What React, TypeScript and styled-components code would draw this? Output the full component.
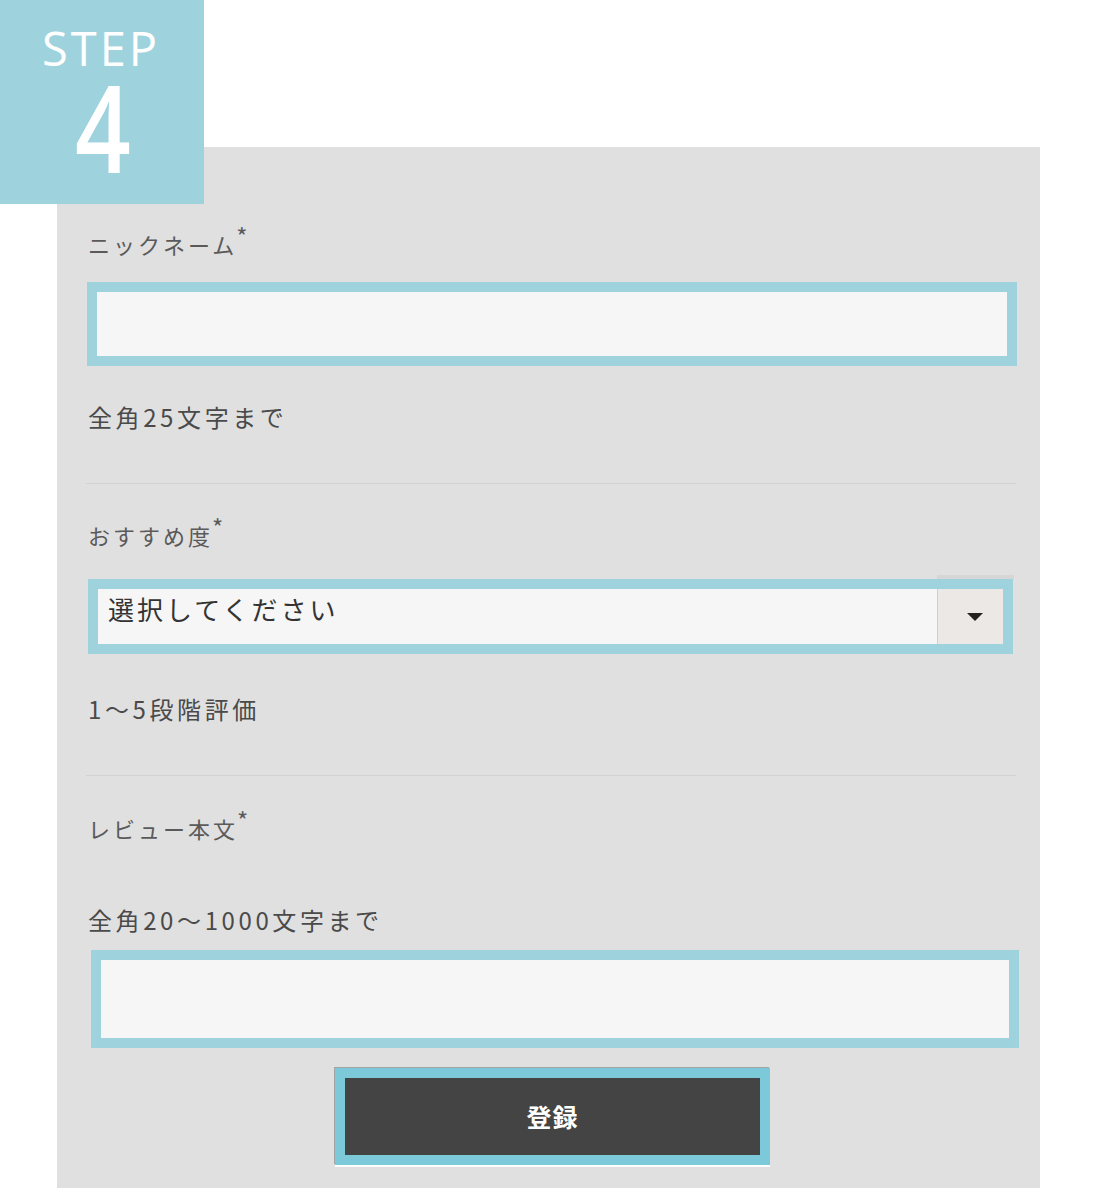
import React from "react";
import styled, { createGlobalStyle } from "styled-components";

const Global = createGlobalStyle`
  html, body { margin: 0; padding: 0; background: #ffffff; }
  body { font-family: "Noto Sans CJK JP", "Noto Sans", sans-serif; }
  * { box-sizing: border-box; }
`;

const Page = styled.div`
  width: 1100px;
  height: 1190px;
  position: relative;
`;

const Badge = styled.div`
  position: relative;
  z-index: 2;
  width: 204px;
  height: 204px;
  background: #9ed3de;
  color: #ffffff;
  display: flex;
  flex-direction: column;
  align-items: center;
  font-family: "Open Sans", "Roboto", sans-serif;
`;

const StepWord = styled.div`
  margin-top: 24px;
  margin-left: -2px;
  font-size: 47px;
  font-weight: 500;
  letter-spacing: 3px;
  line-height: 48px;
  height: 48px;
`;

const StepNum = styled.div`
  margin-top: 4px;
  margin-left: 2px;
  font-size: 122px;
  font-weight: 600;
  line-height: 100px;
  height: 100px;
  transform: scaleX(0.8);
`;

const Panel = styled.div`
  position: relative;
  z-index: 1;
  margin: -57px 0 0 57px;
  width: 983px;
  height: 1041px;
  background: #e0e0e0;
  padding: 82px 23px 0 31px;
  display: flex;
  flex-direction: column;
`;

const Label = styled.div<{ $mt?: number }>`
  margin-top: ${(p) => p.$mt ?? 0}px;
  font-size: 22px;
  line-height: 30px;
  height: 30px;
  letter-spacing: 3px;
  color: #5a5a5a;
  white-space: nowrap;
`;

const Req = styled.span`
  display: inline-block;
  font-size: 24px;
  line-height: 0;
  letter-spacing: 0;
  position: relative;
  top: -8px;
  margin-left: -1px;
  color: #5a5a5a;
`;

const Note = styled.div<{ $mt: number }>`
  margin-top: ${(p) => p.$mt}px;
  font-size: 24px;
  line-height: 36px;
  letter-spacing: 3.6px;
  color: #4a4a4a;
  white-space: nowrap;
`;

const Divider = styled.hr`
  margin: 48px 0 0 -2px;
  width: 930px;
  height: 0;
  border: none;
  border-top: 1px solid #d2d2d2;
`;

const TextField = styled.div<{ $mt: number; $h: number; $ml?: number; $w: number }>`
  margin-top: ${(p) => p.$mt}px;
  margin-left: ${(p) => p.$ml ?? 0}px;
  width: ${(p) => p.$w}px;
  height: ${(p) => p.$h}px;
  border: 10px solid #9ed3de;
  background: #f6f6f6;
`;

const Select = styled.div`
  margin-top: 29px;
  width: 925px;
  height: 75px;
  border: 10px solid #9ed3de;
  background: #f6f6f6;
  display: flex;
  align-items: stretch;
  position: relative;
`;

const SelectText = styled.div`
  flex: 1;
  padding-left: 10px;
  font-size: 26px;
  line-height: 40px;
  letter-spacing: 3px;
  color: #333333;
`;

const SelectButton = styled.div`
  width: 66px;
  background: #ebe8e5;
  border-left: 1px solid #cfcfcf;
  display: flex;
  align-items: center;
  justify-content: center;
  position: relative;
  &::before {
    content: "";
    position: absolute;
    left: -1px;
    top: -14px;
    width: 77px;
    height: 4px;
    background: #d6d6d6;
  }
`;

const Arrow = styled.div`
  width: 0;
  height: 0;
  border-left: 8px solid transparent;
  border-right: 8px solid transparent;
  border-top: 8px solid #222222;
  margin-left: 9px;
`;

const SubmitRow = styled.div`
  margin-top: 20px;
  display: flex;
  justify-content: center;
`;

const Submit = styled.button`
  width: 435px;
  height: 97px;
  border: 10px solid #7ccad9;
  background: #444444;
  color: #ffffff;
  font-family: "Noto Sans CJK JP", sans-serif;
  font-size: 25px;
  font-weight: 700;
  letter-spacing: 1px;
  box-shadow: -1px -1px 0 #a3a3a3, 0 2px 0 #ffffff;
  padding: 0 0 2px 0;
  cursor: pointer;
`;

export default function App() {
  return (
    <Page>
      <Global />
      <Badge>
        <StepWord>STEP</StepWord>
        <StepNum>4</StepNum>
      </Badge>
      <Panel>
        <Label>
          ニックネーム<Req>*</Req>
        </Label>
        <TextField $mt={23} $h={84} $ml={-1} $w={930} />
        <Note $mt={33}>全角25文字まで</Note>
        <Divider />
        <Label $mt={36}>
          おすすめ度<Req>*</Req>
        </Label>
        <Select>
          <SelectText>選択してください</SelectText>
          <SelectButton>
            <Arrow />
          </SelectButton>
        </Select>
        <Note $mt={37}>1〜5段階評価</Note>
        <Divider />
        <Label $mt={37}>
          レビュー本文<Req>*</Req>
        </Label>
        <Note $mt={59}>全角20〜1000文字まで</Note>
        <TextField $mt={12} $h={98} $ml={3} $w={928} />
        <SubmitRow>
          <Submit>登録</Submit>
        </SubmitRow>
      </Panel>
    </Page>
  );
}
